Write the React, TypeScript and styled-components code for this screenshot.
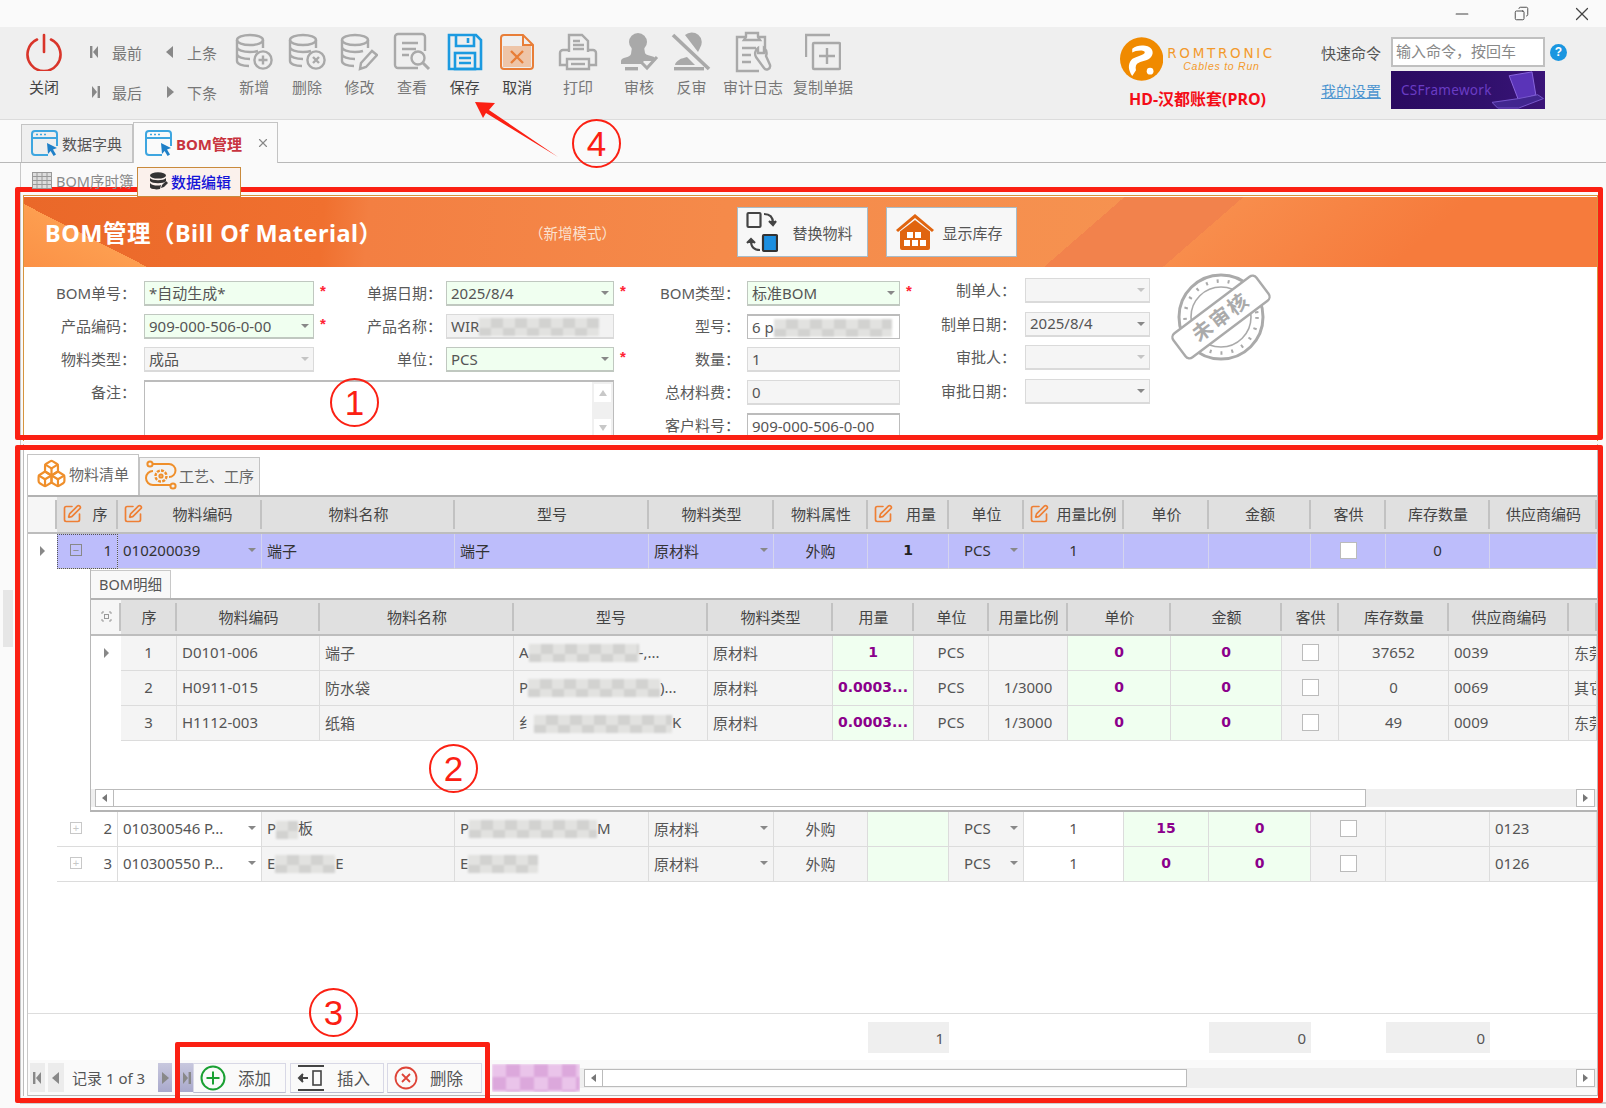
import React from 'react';
import styled, { createGlobalStyle } from 'styled-components';
import { Boxes, Copy, Minus, SquarePen, X } from 'lucide-react';

const Global = createGlobalStyle`
  html, body { margin: 0; padding: 0; background: #fafafa; }
  * { box-sizing: border-box; }
  body { font-family: "Noto Sans", "Noto Sans CJK SC", sans-serif; font-size: 15px; color: #555; }
`;

const Page = styled.div`
  position: relative; width: 1606px; height: 1108px; overflow: hidden;
  display: flex; flex-direction: column; background: #fafafa;
`;

/* ---------- title bar ---------- */
const TitleBar = styled.div`
  height: 27px; display: flex; justify-content: flex-end; align-items: center; gap: 42px; padding-right: 13px; color: #444;
`;

/* ---------- ribbon ---------- */
const Ribbon = styled.div`
  height: 93px; display: flex; background: #efefef; border-bottom: 1px solid #dcdcdc; padding: 6px 39px 0 18px;
`;
const ToolBtn = styled.div<{ $w: number; $ml?: number; $dark?: boolean }>`
  width: ${p => p.$w}px; margin-left: ${p => p.$ml ?? 0}px; flex: none;
  display: flex; flex-direction: column; align-items: center; color: ${p => (p.$dark ? '#444' : '#777')};
`;
const ToolIcon = styled.div`
  height: 38px; display: flex; align-items: center; justify-content: center;
`;
const ToolLabel = styled.div`
  margin-top: 6px; line-height: 20px; white-space: nowrap;
`;
const NavGroup = styled.div`
  width: 158px; flex: none; padding-left: 18px; margin-top: 9px;
  display: grid; grid-template-columns: 75px 75px; grid-auto-rows: 20px; row-gap: 20px;
`;
const NavItem = styled.div`
  display: flex; align-items: center; gap: 10px; color: #777; white-space: nowrap;
`;
const Brand = styled.div`
  margin-left: auto; margin-right: 46px; width: 155px; margin-top: 3px; display: flex; flex-direction: column; align-items: stretch;
`;
const LogoRow = styled.div`
  display: flex; gap: 4px; align-items: center; height: 46px;
`;
const LogoWords = styled.div`
  display: flex; flex-direction: column; color: #f39a2c;
`;
const LogoName = styled.div`
  font: 13.5px/14px "DejaVu Sans", sans-serif; letter-spacing: 2.7px; white-space: nowrap;
`;
const LogoSlogan = styled.div`
  font: italic 10.5px/13px "Liberation Sans", sans-serif; letter-spacing: 0.75px; padding-left: 16px; white-space: nowrap;
`;
const AccountName = styled.div`
  margin-top: 7px; text-align: center; line-height: 20px; color: #f40d17; font-weight: 700; font-size: 16px; white-space: nowrap;
  font-family: "Noto Sans", "Noto Sans CJK SC", sans-serif;
`;
const CmdGrid = styled.div`
  margin-top: 4px; display: grid; grid-template-columns: 70px 154px 22px; grid-template-rows: 30px 38px; row-gap: 4px;
  align-items: center;
`;
const CmdInput = styled.div`
  height: 30px; background: #fff; border: 2px solid #c0c0c0; padding-left: 3px; line-height: 24px; color: #888; white-space: nowrap; overflow: hidden;
`;
const Help = styled.div`
  width: 17px; height: 17px; margin-left: 5px; border-radius: 50%; background: #1a96e0; color: #fff; font-size: 12px; font-weight: 700;
  display: flex; align-items: center; justify-content: center; font-family: "Liberation Sans", sans-serif;
`;
const SettingsLink = styled.a`
  color: #4d95cf; text-decoration: underline;
`;
const CsBanner = styled.div`
  height: 38px; display: flex; align-items: center; justify-content: space-between; padding-left: 10px; overflow: hidden;
  background: linear-gradient(90deg, #2a0a60, #30106c 60%, #3a1478);
  color: #6a3cc4; font-size: 13.5px; letter-spacing: 0.3px; font-family: "Noto Sans", sans-serif;
`;

/* ---------- document tabs ---------- */
const DocTabs = styled.div`
  height: 43px; padding-left: 21px; display: flex; align-items: flex-end; border-bottom: 1px solid #b8b8b8; flex: none;
`;
const DocTab = styled.div<{ $active?: boolean }>`
  height: ${p => (p.$active ? 41 : 38)}px; width: ${p => (p.$active ? 145 : 112)}px;
  display: flex; align-items: center; gap: 3px; padding-left: ${p => (p.$active ? 11 : 9)}px;
  border: 1px solid #c4c4c4; border-bottom: none; background: ${p => (p.$active ? '#fafafa' : '#efefef')};
  margin-bottom: ${p => (p.$active ? '-1px' : 0)}; position: relative;
`;
const DocTabLabel = styled.span<{ $active?: boolean }>`
  color: ${p => (p.$active ? '#c8343f' : '#555')}; font-weight: ${p => (p.$active ? 700 : 400)}; white-space: nowrap;
`;
const DocTabClose = styled.span`
  margin-left: 11px; display: flex; color: #888;
`;

/* ---------- workspace ---------- */
const Workspace = styled.div`
  flex: 1; display: flex; min-height: 0;
`;
const SideRail = styled.div`
  width: 20px; flex: none; padding: 0 7px 0 3px; display: flex; flex-direction: column;
`;
const RailGrip = styled.div`
  margin-top: 427px; height: 57px; background: #e6e6e6;
`;
const Content = styled.div`
  width: 1586px; height: 941px; border-left: 1px solid #c8c8c8; border-bottom: 2px solid #cfcfcf; padding: 0 8px 6px 2px; display: flex; flex-direction: column;
`;
const SubTabs = styled.div`
  height: 32px; display: flex; align-items: flex-end; padding-left: 3px; flex: none; position: relative; z-index: 1;
`;
const SubTab = styled.div<{ $active?: boolean }>`
  height: ${p => (p.$active ? 30 : 28)}px; width: ${p => (p.$active ? 104 : 111)}px; flex: none;
  display: flex; gap: ${p => (p.$active ? 3 : 4)}px; align-items: center; padding-left: ${p => (p.$active ? 11 : 6)}px; padding-bottom: 2px;
  margin-bottom: ${p => (p.$active ? '-2px' : 0)};
  border: ${p => (p.$active ? '1px solid #c98a3c' : 'none')}; background: ${p => (p.$active ? '#fbf1ec' : 'transparent')};
  color: ${p => (p.$active ? '#1414d8' : '#8a8a8a')}; font-weight: ${p => (p.$active ? 500 : 400)}; font-size: ${p => (p.$active ? 15 : 14.5)}px; white-space: nowrap;
`;

/* ---------- form panel ---------- */
const FormPanel = styled.section`
  flex: none; background: #fff; border: 1px solid #d6953f; border-bottom: none; padding-top: 1px; height: 246px; overflow: hidden; margin-bottom: 3px;
`;
const Banner = styled.div`
  height: 70px; display: flex; align-items: center; padding-left: 21px; color: #fff;
  background:
    linear-gradient(207deg, transparent calc(100% - 56px), #fd9e50 calc(100% - 56px), #fb9146 100%),
    linear-gradient(139deg, transparent 722px, #f2824c 722px, #f2824c 800px, #f88d4c 800px, #f67b3c 950px),
    linear-gradient(95deg, #ea6829 0, #f0702f 300px, #f37f42 345px, #f58a4a 700px, #f69250 1100px);
`;
const BannerTitle = styled.div`
  width: 484px; flex: none; font-size: 23.5px; font-weight: 700; letter-spacing: 0.5px; white-space: nowrap;
`;
const BannerMode = styled.div`
  width: 207.5px; flex: none; color: #fbe2d0; font-size: 14.5px; white-space: nowrap;
`;
const BannerBtn = styled.div<{ $ml?: number; $gap: number }>`
  width: 131px; height: 50px; flex: none; margin-left: ${p => p.$ml ?? 0}px; background: #f7f7f7; border: 1px solid #a8bcc8;
  display: flex; align-items: center; gap: ${p => p.$gap}px; padding-left: 8px; color: #555;
`;
const FormBody = styled.div`
  display: flex; align-items: flex-start; padding-top: 14px; height: 175px;
`;
const FieldGrid = styled.div<{ $cols: string; $gap: number; $mt?: number; $rows?: string }>`
  display: grid; grid-template-columns: ${p => p.$cols}; row-gap: ${p => p.$gap}px; grid-auto-rows: 24px;
  ${p => (p.$rows ? `grid-template-rows: ${p.$rows};` : '')} margin-top: ${p => p.$mt ?? 0}px; flex: none; align-items: start;
`;
const FieldLabel = styled.div<{ $pr: number }>`
  text-align: right; padding-right: ${p => p.$pr}px; line-height: 24px; color: #5a5a5a; white-space: nowrap;
`;
const FieldBox = styled.div<{ $tone?: 'green' | 'read' | 'plain' | 'dim' }>`
  height: 25px; padding: 0 4px; display: flex; align-items: center; justify-content: space-between; overflow: hidden; white-space: nowrap;
  border: 1px solid ${p => (p.$tone === 'plain' ? '#bcbcbc' : p.$tone === 'green' ? '#c0c8c0' : '#dadada')};
  border-width: ${p => (p.$tone === 'plain' ? '2px 1px 1px 1px' : '1px 1px 2px 1px')};
  background: ${p => (p.$tone === 'green' ? '#f0fff0' : p.$tone === 'plain' ? '#fff' : p.$tone === 'dim' ? '#f2f2f2' : '#f5f5f5')};
  color: #555; line-height: 23px;
`;
const Star = styled.div`
  color: #f23; font-weight: 700; padding-left: 6px; line-height: 20px; font-size: 15px; font-family: "Liberation Sans", sans-serif;
`;
const Caret = styled.span<{ $light?: boolean; $ml?: number }>`
  display: inline-block; flex: none; width: 0; height: 0; margin-left: ${p => p.$ml ?? 0}px;
  border-left: 4px solid transparent; border-right: 4px solid transparent; border-top: 4px solid ${p => (p.$light ? '#c4c4c4' : '#888')};
`;
const RemarkBox = styled.div`
  grid-column: 2 / 6; height: 60px; background: #fff; border: 1px solid #bcbcbc; border-top-width: 2px; display: flex; justify-content: flex-end;
`;
const RemarkScroll = styled.div`
  width: 21px; background: #f0f0f0; display: flex; flex-direction: column; justify-content: space-between; align-items: center; padding: 2px 0;
`;
const RemarkArrow = styled.div`
  width: 17px; height: 18px; background: #fff; display: flex; align-items: center; justify-content: center;
`;
const StampWrap = styled.div`
  margin: -18px 0 0 17px; flex: none;
`;

/* ---------- grid panel ---------- */
const GridOuter = styled.section`
  flex: 1; min-height: 0; border: 1px solid #bcbcbc; border-width: 0 1px; padding: 10px 0 0 3px; display: flex; flex-direction: column; background: #fff;
`;
const GridTabs = styled.div`
  height: 41px; flex: none; display: flex; align-items: flex-end;
`;
const GridTab = styled.div<{ $active?: boolean; $w: number }>`
  width: ${p => p.$w}px; height: ${p => (p.$active ? 41 : 38)}px; display: flex; align-items: center; gap: 2px; padding-left: ${p => (p.$active ? 8 : 5)}px; padding-bottom: 3px;
  border: 1px solid #c4c4c4; border-bottom: none; background: ${p => (p.$active ? '#fff' : '#f2f2f2')}; white-space: nowrap; color: #666;
`;
const Grid = styled.div`
  flex: 1; min-height: 0; border-left: 1px solid #c8c8c8; display: flex; flex-direction: column;
`;
const HeadRow = styled.div<{ $cols: string; $h: number }>`
  height: ${p => p.$h}px; flex: none; display: grid; grid-template-columns: ${p => p.$cols}; background: #e0e0e0;
  border-top: 2px solid #b2b2b2; border-bottom: 2px solid #bdbdbd;
`;
const HeadCell = styled.div<{ $blank?: boolean }>`
  position: relative; display: flex; align-items: center; justify-content: center; padding-bottom: 2px; color: #444; white-space: nowrap; overflow: hidden;
  background: ${p => (p.$blank ? '#f6f6f6' : 'transparent')};
  &::after { content: ""; position: absolute; right: 0; top: 3px; bottom: 3px; width: 2px; background: #c2c2c2; }
`;
const HeadText = styled.span`
  flex: 1; text-align: center;
`;
const BodyRow = styled.div<{ $cols: string; $h?: number; $purple?: boolean }>`
  height: ${p => p.$h ?? 35}px; flex: none; display: grid; grid-template-columns: ${p => p.$cols};
  ${p => (p.$purple ? 'color: #333;' : '')}
`;
type Tone = 'green' | 'white' | 'gray' | 'purple' | 'none';
const toneBg: Record<Tone, string> = { green: '#f0fff0', white: '#fff', gray: '#f4f4f4', purple: '#bdbdfb', none: 'transparent' };
const Cell = styled.div<{ $tone?: Tone; $align?: 'left' | 'center' | 'right'; $focus?: boolean; $noline?: boolean }>`
  display: flex; align-items: center; min-width: 0; overflow: hidden; white-space: nowrap; padding: 0 5px 2px;
  justify-content: ${p => (p.$align === 'center' ? 'center' : p.$align === 'right' ? 'flex-end' : 'space-between')};
  background: ${p => toneBg[p.$tone ?? 'gray']};
  ${p => (p.$noline ? '' : `border-right: 1px solid ${p.$tone === 'purple' ? '#d4d4ee' : '#dcdcdc'}; border-bottom: 1px solid ${p.$tone === 'purple' ? '#d0d0d0' : '#dcdcdc'};`)}
  ${p => (p.$focus ? 'outline: 1px dotted #555; outline-offset: -1px;' : '')}
`;
const Strong = styled.span`
  font-family: "DejaVu Sans", sans-serif; font-weight: 700; font-size: 14px; color: #8b008b;
`;
const Qty = styled.span`
  font-family: "DejaVu Sans", sans-serif; font-weight: 700; font-size: 14px; color: #222;
`;
const Indented = styled.span`
  padding-left: 10px;
`;
const CheckBox = styled.span`
  width: 17px; height: 17px; background: #fff; border: 1px solid #bbb; flex: none; display: block;
`;
const TreeBox = styled.span<{ $light?: boolean }>`
  width: 12px; height: 12px; flex: none; position: relative; display: block; margin-right: auto; margin-left: 8px;
  border: 1px solid ${p => (p.$light ? '#c8c8c8' : '#888')};
  color: ${p => (p.$light ? '#c8c8c8' : '#888')};
  font: 11px/10px "Liberation Sans", sans-serif; text-align: center;
`;
const RowArrow = styled.span`
  width: 0; height: 0; border-top: 5px solid transparent; border-bottom: 5px solid transparent; border-left: 5px solid #888; display: block;
`;
const Detail = styled.div`
  height: 243px; flex: none; padding-left: 62px; display: flex;
`;
const DetailBox = styled.div`
  flex: 1; min-width: 0; border-left: 1px solid #b8b8b8; border-bottom: 2px solid #b4b4b4; display: flex; flex-direction: column; padding-top: 1px;
`;
const DetailTabs = styled.div`
  height: 28px; flex: none; display: flex;
`;
const DetailTab = styled.div`
  width: 80px; background: #f8f8f8; border: 1px solid #c8c8c8; border-left: none; border-bottom: none; display: flex; align-items: center; justify-content: center; color: #555; font-size: 14.5px; padding-bottom: 2px;
`;
const Filler = styled.div`
  flex: 1; min-height: 0;
`;
const ScrollTrack = styled.div<{ $h?: number; $mb?: number; $grow?: boolean }>`
  height: ${p => p.$h ?? 18}px; margin-bottom: ${p => p.$mb ?? 0}px; background: #efefef; display: flex; align-items: center; justify-content: space-between;
  padding: 0 2px 0 4px; flex: ${p => (p.$grow ? 1 : 'none')}; min-width: 0;
`;
const ScrollEnd = styled.div`
  width: 19px; height: 18px; background: #fff; border: 1px solid #bbb; display: flex; align-items: center; justify-content: center; flex: none;
`;
const ScrollThumb = styled.div<{ $w: number }>`
  width: ${p => p.$w}px; height: 18px; background: #fff; border: 1px solid #bbb; flex: none; margin-left: -1px; margin-right: auto;
`;
const ArrowGlyph = styled.span<{ $dir: 'left' | 'right' | 'up' | 'down'; $c?: string }>`
  display: block; width: 0; height: 0; border: 4px solid transparent;
  ${p => (p.$dir === 'left' ? `border-right: 5px solid ${p.$c ?? '#777'}; border-left: none;` : '')}
  ${p => (p.$dir === 'right' ? `border-left: 5px solid ${p.$c ?? '#777'}; border-right: none;` : '')}
  ${p => (p.$dir === 'up' ? `border-bottom: 6px solid ${p.$c ?? '#c8c8c8'}; border-top: none;` : '')}
  ${p => (p.$dir === 'down' ? `border-top: 6px solid ${p.$c ?? '#c8c8c8'}; border-bottom: none;` : '')}
`;
const Footer = styled.div<{ $cols: string }>`
  height: 47px; flex: none; display: grid; grid-template-columns: ${p => p.$cols}; border-top: 1px solid #ddd; padding-top: 8px; background: #fff;
`;
const FooterCell = styled.div<{ $filled?: boolean }>`
  height: 31px; background: ${p => (p.$filled ? '#efefef' : 'transparent')}; display: flex; align-items: center; justify-content: flex-end; padding-right: 5px;
`;
const NavBar = styled.div`
  height: 36px; flex: none; display: flex; align-items: center; background: #fafafa; border-bottom: 1px solid #b8b8b8; padding: 0 0 0 2px;
`;
const PagerBtn = styled.div<{ $w: number; $ml?: number; $hot?: boolean }>`
  width: ${p => p.$w}px; height: 29px; margin-left: ${p => p.$ml ?? 0}px; flex: none; display: flex; align-items: center; justify-content: center; gap: 1px;
  background: ${p => (p.$hot ? 'linear-gradient(180deg,#c8c8de,#a9a9cc)' : '#ececec')};
`;
const PagerText = styled.div`
  width: 94px; flex: none; padding-left: 8px; white-space: nowrap; color: #555;
`;
const ActionBtn = styled.div<{ $w: number; $ml?: number; $gap: number }>`
  width: ${p => p.$w}px; height: 30px; flex: none; margin-left: ${p => p.$ml ?? 0}px; background: #fafafa; border: 1px solid #d8d8e6; border-bottom-color: #bcbcd0;
  display: flex; align-items: center; gap: ${p => p.$gap}px; padding-left: 6px; color: #555; font-size: 16.5px;
`;
const Mosaic = styled.span<{ $w: number; $h?: number; $pink?: boolean }>`
  display: inline-block; flex: none; vertical-align: middle; width: ${p => p.$w}px; height: ${p => p.$h ?? 18}px; filter: blur(1.2px);
  background: ${p => (p.$pink
    ? 'repeating-conic-gradient(#dca8dc 0 25%, #eac4ea 0 50%) 0 0 / 28px 26px'
    : 'repeating-conic-gradient(#d2d2d0 0 25%, #e2e2e0 0 50%) 0 0 / 24px 20px')};
`;
const PinkPatch = styled.div`
  margin-left: 10px; width: 88px; height: 28px; flex: none; overflow: hidden; display: flex;
`;

/* ---------- annotation overlay ---------- */
const Overlay = styled.div`
  position: absolute; inset: 0; pointer-events: none;
`;
const RedFrame = styled.div<{ $x: number; $y: number; $w: number; $h: number }>`
  position: absolute; left: ${p => p.$x}px; top: ${p => p.$y}px; width: ${p => p.$w}px; height: ${p => p.$h}px;
  border: 5px solid #fb2013; border-radius: 2px;
`;
const Badge = styled.div<{ $x: number; $y: number }>`
  position: absolute; left: ${p => p.$x - 24}px; top: ${p => p.$y - 24}px; width: 49px; height: 49px; border-radius: 50%;
  border: 2px solid #fb2013; color: #fb2013; display: flex; align-items: center; justify-content: center;
  font: 35px/1 "Liberation Sans", sans-serif; background: transparent;
`;
const ArrowSvg = styled.svg`
  position: absolute; left: 0; top: 0;
`;

/* ---------- drawn icons ---------- */
const G = '#a9a9a9';
const W = 2.4;
const DbBase = ({ extra }: { extra?: React.ReactNode }) => (
  <svg width="38" height="38" viewBox="0 0 38 38" fill="none" stroke={G} strokeWidth={W}>
    <ellipse cx="15" cy="7" rx="13" ry="5" />
    <path d="M2 7v21c0 3 5 5 12 5M28 7v8M2 14c0 3 6 5 13 5 3 0 6-.4 8-1M2 21c0 3 6 5 13 5" />
    {extra}
  </svg>
);
const PowerIcon = () => (
  <svg width="36" height="38" viewBox="0 0 36 38" fill="none" stroke="#d9352a" strokeWidth="2.6" strokeLinecap="round">
    <path d="M11 6.5a16.5 16.5 0 1 0 14 0" />
    <path d="M18 2v17" />
  </svg>
);
const ReviewIcon = () => (
  <svg width="38" height="40" viewBox="0 0 38 40" fill="none" stroke={G} strokeWidth={W}>
    <path d="M25 36H5a3 3 0 0 1-3-3V5a3 3 0 0 1 3-3h24a3 3 0 0 1 3 3v14" />
    <path d="M9 11h16M9 17h14M9 23h7" />
    <circle cx="25" cy="26" r="6.5" />
    <path d="M30 31l6 6" strokeWidth="3" />
  </svg>
);
const SaveIcon = () => (
  <svg width="36" height="38" viewBox="0 0 36 38" fill="none" stroke="#1c9ae0" strokeWidth="2.6">
    <path d="M2 2h27l5 5v29H2z" />
    <path d="M9 2v11h18V2M21 5v5" />
    <rect x="8" y="20" width="20" height="16" />
    <path d="M12 25h12M12 30h12" />
  </svg>
);
const CancelIcon = () => (
  <svg width="36" height="38" viewBox="0 0 36 38" fill="none" stroke="#e87e38" strokeWidth="2">
    <path d="M4 13h28v21H4z" fill="#eec5a8" stroke="none" />
    <path d="M5 2h19l10 10v21a3 3 0 0 1-3 3H5a3 3 0 0 1-3-3V5a3 3 0 0 1 3-3z" />
    <path d="M24 2v10h10" />
    <path d="M12 18l12 12M24 18L12 30" strokeWidth="2.4" />
  </svg>
);
const PrintIcon = () => (
  <svg width="40" height="38" viewBox="0 0 40 38" fill="none" stroke={G} strokeWidth={W}>
    <path d="M11 19V2h13l6 6v11" />
    <path d="M15 8h7M15 12h11M15 16h11" />
    <path d="M11 17H5a3 3 0 0 0-3 3v12h7M29 17h6a3 3 0 0 1 3 3v12h-7" />
    <path d="M9 26h22v10H9z" />
    <path d="M13 31h14" />
  </svg>
);
const ApproveIcon = () => (
  <svg width="40" height="40" viewBox="0 0 40 40" fill={G}>
    <circle cx="19" cy="10" r="9" />
    <path d="M13 15h12l1 6c1 3 9 2 11 6l-1 2H25l-3 3H2v-3c0-4 9-3 10-7z" />
    <rect x="6" y="35" width="13" height="3.4" />
    <path d="M22 30l6 6 10-11" fill="none" stroke={G} strokeWidth="3" />
  </svg>
);
const UnapproveIcon = () => (
  <svg width="40" height="40" viewBox="0 0 40 40" fill={G}>
    <path d="M14 3a10 10 0 0 1 15 13l-2 4z" />
    <path d="M8 28c2-2 6-2 8-3l8 8H4c0-2 2-4 4-5z" />
    <rect x="3" y="35" width="30" height="3.4" />
    <path d="M2 3l36 34" stroke={G} strokeWidth="3.6" />
  </svg>
);
const LogIcon = () => (
  <svg width="38" height="42" viewBox="0 0 38 42" fill="none" stroke={G} strokeWidth={W}>
    <path d="M11 6H3v34h22M25 6h6v12" />
    <path d="M12 6V2h12v4l2 3H10z" />
    <path d="M8 17h14M8 24h9M8 31h9" />
    <path d="M24 17a7 7 0 0 0-2 9l8 11c2 3 7 1 6-3l-4-9a7 7 0 0 0-2-8v5h-6z" />
  </svg>
);
const CloneIcon = () => (
  <svg width="36" height="38" viewBox="0 0 36 38" fill="none" stroke={G} strokeWidth={W}>
    <path d="M1 24V2h24" />
    <rect x="8" y="10" width="27" height="26" rx="1" />
    <path d="M22 15v16M14 23h16" />
  </svg>
);
const NavIcon = ({ kind }: { kind: 'first' | 'prev' | 'next' | 'last' }) => (
  <svg width="14" height="16" viewBox="0 0 14 16" fill="#888">
    {kind === 'first' && <><rect x="2" y="2" width="2.4" height="12" /><path d="M10 2v12L5 8z" /></>}
    {kind === 'prev' && <path d="M10 2v12L3 8z" />}
    {kind === 'next' && <path d="M4 2v12l7-6z" />}
    {kind === 'last' && <><rect x="9.6" y="2" width="2.4" height="12" /><path d="M4 2v12l5-6z" /></>}
  </svg>
);
const WindowIcon = () => (
  <svg width="28" height="27" viewBox="0 0 28 27" fill="none">
    <path d="M17 25H4a3 3 0 0 1-3-3V4a3 3 0 0 1 3-3h19a3 3 0 0 1 3 3v12" stroke="#3ea6e0" strokeWidth="2" />
    <path d="M1 8h25" stroke="#3ea6e0" strokeWidth="2" />
    <path d="M5 4.5h2M9 4.5h2M13 4.5h2" stroke="#3ea6e0" strokeWidth="1.4" />
    <path d="M16 13l10 5-4 1.5 3 5-2.4 1.5-3-5L17 24z" fill="#1f80c8" />
  </svg>
);
const TableIcon = () => (
  <svg width="20" height="17" viewBox="0 0 20 17" fill="none" stroke="#999" strokeWidth="1">
    <rect x="0.5" y="0.5" width="19" height="16" fill="#ddd" />
    <path d="M5 .5v16M10 .5v16M15 .5v16M.5 4.5h19M.5 8.5h19M.5 12.5h19" />
  </svg>
);
const DbDarkIcon = () => (
  <svg width="19" height="18" viewBox="0 0 19 18" fill="#333">
    <ellipse cx="9" cy="3.4" rx="8" ry="3.2" />
    <path d="M1 6c2 3 14 3 16 0v3c-2 3-14 3-16 0zM1 11c2 3 9 3 11 2l-1 4c-4 1-10 0-10-2z" />
    <path d="M12 16l1-3 4-4 2 2-4 4z" />
  </svg>
);
const SwapIcon = () => (
  <svg width="32" height="42" viewBox="0 0 32 42" fill="none" stroke="#444" strokeWidth="2.2">
    <rect x="1.5" y="2" width="13" height="14" rx="1" />
    <path d="M18 3c6 0 9 3 9 9" />
    <path d="M23 10l4 4 3-4" fill="#444" />
    <path d="M14 39c-6 0-9-3-9-9" />
    <path d="M1 32l4-4 4 4" fill="#444" />
    <rect x="17" y="24" width="14" height="16" rx="1" fill="#1c8fe0" stroke="#333" />
  </svg>
);
const HouseIcon = () => (
  <svg width="40" height="38" viewBox="0 0 40 38" fill="#e0640f">
    <path d="M20 1L1 17l2 2L20 5l17 14 2-2z" />
    <path d="M5 18.5L20 7l15 11.5V35a2 2 0 0 1-2 2H7a2 2 0 0 1-2-2z" />
    <g fill="#fff">
      <rect x="12" y="19" width="6" height="6" /><rect x="20" y="19" width="6" height="6" />
      <rect x="9" y="27" width="6" height="6" /><rect x="17" y="27" width="6" height="6" /><rect x="25" y="27" width="6" height="6" />
    </g>
  </svg>
);
const RouteIcon = () => (
  <svg width="32" height="30" viewBox="0 0 32 30" fill="none" stroke="#ef8f2b" strokeWidth="2">
    <circle cx="5" cy="4" r="2.6" /><circle cx="28" cy="26" r="2.6" />
    <path d="M8 4h16a6 6 0 0 1 0 13M8 25H25M8 11a7 7 0 0 0 0 14" />
    <circle cx="16" cy="16" r="5.5" strokeDasharray="3 1.2" strokeWidth="2.4" />
    <circle cx="16" cy="16" r="1.6" />
  </svg>
);
const StampIcon = () => (
  <svg width="108" height="108" viewBox="0 0 108 108" fill="none" stroke="#aaa">
    <circle cx="54" cy="54" r="42" strokeWidth="3" />
    <circle cx="54" cy="54" r="30" strokeWidth="1.6" />
    <circle cx="54" cy="54" r="36" strokeWidth="3.5" strokeDasharray="2 9" />
    <g transform="rotate(-37 54 54)">
      <rect x="2" y="39" width="104" height="30" rx="5" fill="#fff" strokeWidth="2.4" />
      <text x="54" y="61" textAnchor="middle" fontSize="20" fontWeight="700" fill="#aaa" stroke="none" letterSpacing="2" fontFamily='"Noto Sans CJK SC", sans-serif'>未审核</text>
    </g>
  </svg>
);
const LogoMark = () => (
  <svg width="46" height="46" viewBox="0 0 46 46">
    <circle cx="23" cy="23" r="23" fill="#f08a00" />
    <path d="M13 12c4-3 9-4 14-3 7 1 10 7 6 12-3 4-9 4-13 6-3 1-4 4-3 8l-4 6c-4-6-5-12-1-17 3-3 11-4 14-7 1-2-1-3-4-3-4 0-7 1-9 2z" fill="#fff" />
    <circle cx="32" cy="36" r="3.6" fill="#fff" />
  </svg>
);
const LaptopArt = () => (
  <svg width="56" height="38" viewBox="0 0 56 38">
    <path d="M18 4l24-4 4 24-18 6z" fill="#5a34b8" stroke="#8c68e0" strokeWidth="1" />
    <path d="M0 32l28-4 20-4 6 4-26 10H6z" fill="#41268f" stroke="#7a5ad0" strokeWidth="1" />
  </svg>
);
const MiniGlyph = () => (
  <svg width="11" height="11" viewBox="0 0 11 11" fill="none" stroke="#999" strokeWidth="1">
    <path d="M1 3V1h2M8 1h2v2M10 8v2H8M3 10H1V8" /><rect x="3.5" y="3.5" width="4" height="4" />
  </svg>
);
const AddIcon = () => (
  <svg width="26" height="26" viewBox="0 0 26 26" fill="none" stroke="#1aa033" strokeWidth="2">
    <circle cx="13" cy="13" r="11.5" /><path d="M13 6.5v13M6.5 13h13" />
  </svg>
);
const InsertIcon = () => (
  <svg width="28" height="28" viewBox="0 0 28 28" fill="none" stroke="#444" strokeWidth="2">
    <path d="M1 2h26M1 26h26" strokeWidth="2" />
    <rect x="16" y="7" width="8" height="14" strokeWidth="1.6" />
    <path d="M2 14h9" /><path d="M6 10l-4 4 4 4" fill="#444" />
  </svg>
);
const RemoveIcon = () => (
  <svg width="24" height="24" viewBox="0 0 24 24" fill="none" stroke="#de4438" strokeWidth="1.8">
    <circle cx="12" cy="12" r="10.5" /><path d="M8 8l8 8M16 8l-8 8" />
  </svg>
);
const PenWrap = styled.span`
  flex: none; display: flex; margin-left: 5px;
`;
const PenIcon = () => <PenWrap><SquarePen size={20} color="#ee7f35" strokeWidth={2} /></PenWrap>;

/* ---------- data ---------- */
const mainCols = '29px 61px 144px 193px 194px 125px 94px 81px 75px 100px 85px 102px 75px 104px 107px';
const subCols = '30px 56px 143px 194px 194px 125px 81px 75px 79px 103px 111px 57px 110px 120px 28px';

const mainHead: Array<[string, boolean]> = [
  ['', false], ['序', true], ['物料编码', true], ['物料名称', false], ['型号', false], ['物料类型', false], ['物料属性', false],
  ['用量', true], ['单位', false], ['用量比例', true], ['单价', false], ['金额', false], ['客供', false], ['库存数量', false], ['供应商编码', false],
];
const subHead = ['', '序', '物料编码', '物料名称', '型号', '物料类型', '用量', '单位', '用量比例', '单价', '金额', '客供', '库存数量', '供应商编码', ''];

const subRows = [
  { n: '1', code: 'D0101-006', name: '端子', model: <>A<Mosaic $w={110} />-,...</>, qty: '1', ratio: '', stock: '37652', vendor: '0039', vendorName: '东莞' },
  { n: '2', code: 'H0911-015', name: '防水袋', model: <>P<Mosaic $w={132} />)...</>, qty: '0.0003...', ratio: '1/3000', stock: '0', vendor: '0069', vendorName: '其它' },
  { n: '3', code: 'H1112-003', name: '纸箱', model: <>纟<Mosaic $w={138} />K</>, qty: '0.0003...', ratio: '1/3000', stock: '49', vendor: '0009', vendorName: '东莞' },
];
const mainRows = [
  { n: '2', code: '010300546 P...', name: <>P<Mosaic $w={22} />板</>, model: <>P<Mosaic $w={128} />M</>, price: '15', vendor: '0123' },
  { n: '3', code: '010300550 P...', name: <>E<Mosaic $w={60} />E</>, model: <>E<Mosaic $w={70} /></>, price: '0', vendor: '0126' },
];

const Req = () => <Star>*</Star>;
const Empty = () => <div />;
const RestoreWrap = styled.span`
  display: flex; transform: scaleX(-1);
`;

export default function App() {
  return (
    <Page>
      <Global />
      <TitleBar>
        <Minus size={20} strokeWidth={1.3} />
        <RestoreWrap><Copy size={15} strokeWidth={1.5} /></RestoreWrap>
        <X size={22} strokeWidth={1.3} />
      </TitleBar>

      <Ribbon>
        <ToolBtn $w={52} $dark><ToolIcon><PowerIcon /></ToolIcon><ToolLabel>关闭</ToolLabel></ToolBtn>
        <NavGroup>
          <NavItem><NavIcon kind="first" />最前</NavItem>
          <NavItem><NavIcon kind="prev" />上条</NavItem>
          <NavItem><NavIcon kind="last" />最后</NavItem>
          <NavItem><NavIcon kind="next" />下条</NavItem>
        </NavGroup>
        <ToolBtn $w={52.6}><ToolIcon><DbBase extra={<><circle cx="28" cy="27" r="8.6" fill="#efefef" /><path d="M28 22.5v9M23.5 27h9" /></>} /></ToolIcon><ToolLabel>新增</ToolLabel></ToolBtn>
        <ToolBtn $w={52.6}><ToolIcon><DbBase extra={<><circle cx="28" cy="27" r="8.6" fill="#efefef" /><path d="M25 24l6 6M31 24l-6 6" /></>} /></ToolIcon><ToolLabel>删除</ToolLabel></ToolBtn>
        <ToolBtn $w={52.6}><ToolIcon><DbBase extra={<path d="M20 36l1-6 11-12 5 4-11 12z" fill="#efefef" />} /></ToolIcon><ToolLabel>修改</ToolLabel></ToolBtn>
        <ToolBtn $w={52.6}><ToolIcon><ReviewIcon /></ToolIcon><ToolLabel>查看</ToolLabel></ToolBtn>
        <ToolBtn $w={52.6} $dark><ToolIcon><SaveIcon /></ToolIcon><ToolLabel>保存</ToolLabel></ToolBtn>
        <ToolBtn $w={52.6} $dark><ToolIcon><CancelIcon /></ToolIcon><ToolLabel>取消</ToolLabel></ToolBtn>
        <ToolBtn $w={52} $ml={8.4}><ToolIcon><PrintIcon /></ToolIcon><ToolLabel>打印</ToolLabel></ToolBtn>
        <ToolBtn $w={52} $ml={9}><ToolIcon><ApproveIcon /></ToolIcon><ToolLabel>审核</ToolLabel></ToolBtn>
        <ToolBtn $w={53}><ToolIcon><UnapproveIcon /></ToolIcon><ToolLabel>反审</ToolLabel></ToolBtn>
        <ToolBtn $w={70}><ToolIcon><LogIcon /></ToolIcon><ToolLabel>审计日志</ToolLabel></ToolBtn>
        <ToolBtn $w={70}><ToolIcon><CloneIcon /></ToolIcon><ToolLabel>复制单据</ToolLabel></ToolBtn>

        <Brand>
          <LogoRow>
            <LogoMark />
            <LogoWords>
              <LogoName>ROMTRONIC</LogoName>
              <LogoSlogan>Cables to Run</LogoSlogan>
            </LogoWords>
          </LogoRow>
          <AccountName>HD-汉都账套(PRO)</AccountName>
        </Brand>
        <CmdGrid>
          <div>快速命令</div>
          <CmdInput>输入命令，按回车</CmdInput>
          <Help>?</Help>
          <SettingsLink>我的设置</SettingsLink>
          <CsBanner>CSFramework<LaptopArt /></CsBanner>
          <Empty />
        </CmdGrid>
      </Ribbon>

      <DocTabs>
        <DocTab><WindowIcon /><DocTabLabel>数据字典</DocTabLabel></DocTab>
        <DocTab $active><WindowIcon /><DocTabLabel $active>BOM管理</DocTabLabel><DocTabClose><X size={14} /></DocTabClose></DocTab>
      </DocTabs>

      <Workspace>
        <SideRail><RailGrip /></SideRail>
        <Content>
          <SubTabs>
            <SubTab><TableIcon />BOM序时簿</SubTab>
            <SubTab $active><DbDarkIcon />数据编辑</SubTab>
          </SubTabs>

          <FormPanel>
            <Banner>
              <BannerTitle>BOM管理（Bill Of Material）</BannerTitle>
              <BannerMode>（新增模式）</BannerMode>
              <BannerBtn $gap={15}><SwapIcon />替换物料</BannerBtn>
              <BannerBtn $ml={18} $gap={8}><HouseIcon />显示库存</BannerBtn>
            </Banner>
            <FormBody>
              <FieldGrid $cols="120px 170px 26px 106px 168px 26px" $gap={9} $rows="24px 24px 24px 60px">
                <FieldLabel $pr={8}>BOM单号：</FieldLabel><FieldBox $tone="green">*自动生成*</FieldBox><Req />
                <FieldLabel $pr={4}>单据日期：</FieldLabel><FieldBox $tone="green">2025/8/4<Caret /></FieldBox><Req />
                <FieldLabel $pr={8}>产品编码：</FieldLabel><FieldBox $tone="green">909-000-506-0-00<Caret /></FieldBox><Req />
                <FieldLabel $pr={4}>产品名称：</FieldLabel><FieldBox $tone="dim"><span>WIR<Mosaic $w={120} /></span></FieldBox><Empty />
                <FieldLabel $pr={8}>物料类型：</FieldLabel><FieldBox>成品<Caret $light /></FieldBox><Empty />
                <FieldLabel $pr={4}>单位：</FieldLabel><FieldBox $tone="green">PCS<Caret /></FieldBox><Req />
                <FieldLabel $pr={8}>备注：</FieldLabel>
                <RemarkBox>
                  <RemarkScroll>
                    <RemarkArrow><ArrowGlyph $dir="up" /></RemarkArrow>
                    <RemarkArrow><ArrowGlyph $dir="down" /></RemarkArrow>
                  </RemarkScroll>
                </RemarkBox>
              </FieldGrid>

              <FieldGrid $cols="107px 153px 30px" $gap={9}>
                <FieldLabel $pr={7}>BOM类型：</FieldLabel><FieldBox $tone="green">标准BOM<Caret /></FieldBox><Req />
                <FieldLabel $pr={7}>型号：</FieldLabel><FieldBox $tone="plain"><span>6 p<Mosaic $w={118} /></span></FieldBox><Empty />
                <FieldLabel $pr={7}>数量：</FieldLabel><FieldBox>1</FieldBox><Empty />
                <FieldLabel $pr={7}>总材料费：</FieldLabel><FieldBox>0</FieldBox><Empty />
                <FieldLabel $pr={7}>客户料号：</FieldLabel><FieldBox $tone="plain">909-000-506-0-00</FieldBox><Empty />
              </FieldGrid>

              <FieldGrid $cols="95px 125px" $gap={9.5} $mt={-3}>
                <FieldLabel $pr={9}>制单人：</FieldLabel><FieldBox><span /><Caret $light /></FieldBox>
                <FieldLabel $pr={9}>制单日期：</FieldLabel><FieldBox>2025/8/4<Caret /></FieldBox>
                <FieldLabel $pr={9}>审批人：</FieldLabel><FieldBox><span /><Caret $light /></FieldBox>
                <FieldLabel $pr={9}>审批日期：</FieldLabel><FieldBox><span /><Caret /></FieldBox>
              </FieldGrid>

              <StampWrap><StampIcon /></StampWrap>
            </FormBody>
          </FormPanel>

          <GridOuter>
            <GridTabs>
              <GridTab $active $w={112}><Boxes size={31} color="#ef8f2b" strokeWidth={1.7} />物料清单</GridTab>
              <GridTab $w={121}><RouteIcon />工艺、工序</GridTab>
            </GridTabs>
            <Grid>
              <HeadRow $cols={mainCols} $h={39}>
                {mainHead.map(([label, pen], i) => (
                  <HeadCell key={i} $blank={i === 0}>
                    {pen && <PenIcon />}
                    <HeadText>{label}</HeadText>
                  </HeadCell>
                ))}
              </HeadRow>

              <BodyRow $cols={mainCols} $purple>
                <Cell $tone="white" $align="center" $noline><RowArrow /></Cell>
                <Cell $tone="purple" $focus $align="right"><TreeBox>−</TreeBox>1</Cell>
                <Cell $tone="purple">010200039<Caret $ml={4} /></Cell>
                <Cell $tone="purple">端子</Cell>
                <Cell $tone="purple">端子</Cell>
                <Cell $tone="purple">原材料<Caret /></Cell>
                <Cell $tone="purple" $align="center">外购</Cell>
                <Cell $tone="purple" $align="center"><Qty>1</Qty></Cell>
                <Cell $tone="purple"><Indented>PCS</Indented><Caret /></Cell>
                <Cell $tone="purple" $align="center">1</Cell>
                <Cell $tone="purple" />
                <Cell $tone="purple" />
                <Cell $tone="purple" $align="center"><CheckBox /></Cell>
                <Cell $tone="purple" $align="center">0</Cell>
                <Cell $tone="purple" />
              </BodyRow>

              <Detail>
                <DetailBox>
                  <DetailTabs><DetailTab>BOM明细</DetailTab></DetailTabs>
                  <HeadRow $cols={subCols} $h={38}>
                    {subHead.map((label, i) => (
                      <HeadCell key={i} $blank={i === 0}>
                        {i === 0 ? <MiniGlyph /> : <HeadText>{label}</HeadText>}
                      </HeadCell>
                    ))}
                  </HeadRow>
                  {subRows.map((r, i) => (
                    <BodyRow key={r.n} $cols={subCols}>
                      <Cell $tone="white" $align="center" $noline>{i === 0 && <RowArrow />}</Cell>
                      <Cell $align="center">{r.n}</Cell>
                      <Cell>{r.code}</Cell>
                      <Cell>{r.name}</Cell>
                      <Cell><span>{r.model}</span></Cell>
                      <Cell>原材料</Cell>
                      <Cell $tone="green" $align="center"><Strong>{r.qty}</Strong></Cell>
                      <Cell $align="center">PCS</Cell>
                      <Cell $align="center">{r.ratio}</Cell>
                      <Cell $tone="green" $align="center"><Strong>0</Strong></Cell>
                      <Cell $tone="green" $align="center"><Strong>0</Strong></Cell>
                      <Cell $align="center"><CheckBox /></Cell>
                      <Cell $align="center">{r.stock}</Cell>
                      <Cell>{r.vendor}</Cell>
                      <Cell>{r.vendorName}</Cell>
                    </BodyRow>
                  ))}
                  <Filler />
                  <ScrollTrack $mb={3}>
                    <ScrollEnd><ArrowGlyph $dir="left" /></ScrollEnd>
                    <ScrollThumb $w={1253} />
                    <ScrollEnd><ArrowGlyph $dir="right" /></ScrollEnd>
                  </ScrollTrack>
                </DetailBox>
              </Detail>

              {mainRows.map(r => (
                <BodyRow key={r.n} $cols={mainCols}>
                  <Cell $tone="white" $noline />
                  <Cell $tone="white" $align="right"><TreeBox $light>+</TreeBox>{r.n}</Cell>
                  <Cell $tone="white">{r.code}<Caret $ml={4} /></Cell>
                  <Cell><span>{r.name}</span></Cell>
                  <Cell><span>{r.model}</span></Cell>
                  <Cell>原材料<Caret /></Cell>
                  <Cell $align="center">外购</Cell>
                  <Cell $tone="green" />
                  <Cell><Indented>PCS</Indented><Caret /></Cell>
                  <Cell $tone="white" $align="center">1</Cell>
                  <Cell $tone="green" $align="center"><Strong>{r.price}</Strong></Cell>
                  <Cell $tone="green" $align="center"><Strong>0</Strong></Cell>
                  <Cell $align="center"><CheckBox /></Cell>
                  <Cell />
                  <Cell>{r.vendor}</Cell>
                </BodyRow>
              ))}

              <Filler />

              <Footer $cols={mainCols}>
                <Empty /><Empty /><Empty /><Empty /><Empty /><Empty /><Empty />
                <FooterCell $filled>1</FooterCell>
                <Empty /><Empty /><Empty />
                <FooterCell $filled>0</FooterCell>
                <Empty />
                <FooterCell $filled>0</FooterCell>
                <Empty />
              </Footer>

              <NavBar>
                <PagerBtn $w={15}><NavIcon kind="first" /></PagerBtn>
                <PagerBtn $w={16} $ml={3}><NavIcon kind="prev" /></PagerBtn>
                <PagerText>记录 1 of 3</PagerText>
                <PagerBtn $w={14} $hot><NavIcon kind="next" /></PagerBtn>
                <PagerBtn $w={14} $ml={7} $hot><NavIcon kind="last" /></PagerBtn>
                <ActionBtn $w={93} $gap={12}><AddIcon />添加</ActionBtn>
                <ActionBtn $w={94} $ml={4} $gap={12}><InsertIcon />插入</ActionBtn>
                <ActionBtn $w={95} $ml={3} $gap={12}><RemoveIcon />删除</ActionBtn>
                <PinkPatch><Mosaic $w={88} $h={28} $pink /></PinkPatch>
                <ScrollTrack $h={20} $grow>
                  <ScrollEnd><ArrowGlyph $dir="left" /></ScrollEnd>
                  <ScrollThumb $w={585} />
                  <ScrollEnd><ArrowGlyph $dir="right" /></ScrollEnd>
                </ScrollTrack>
              </NavBar>
            </Grid>
          </GridOuter>
        </Content>
      </Workspace>

      <Overlay>
        <RedFrame $x={15} $y={187} $w={1588} $h={253} />
        <RedFrame $x={15} $y={445} $w={1588} $h={658} />
        <RedFrame $x={175} $y={1042} $w={315} $h={61} />
        <Badge $x={354} $y={402}>1</Badge>
        <Badge $x={453} $y={768}>2</Badge>
        <Badge $x={333} $y={1012}>3</Badge>
        <Badge $x={596} $y={143}>4</Badge>
        <ArrowSvg width="1606" height="1108" viewBox="0 0 1606 1108">
          <polygon points="475,102 495,103 489,110 558,157 486,113 483,118" fill="#fb2013" />
        </ArrowSvg>
      </Overlay>
    </Page>
  );
}
